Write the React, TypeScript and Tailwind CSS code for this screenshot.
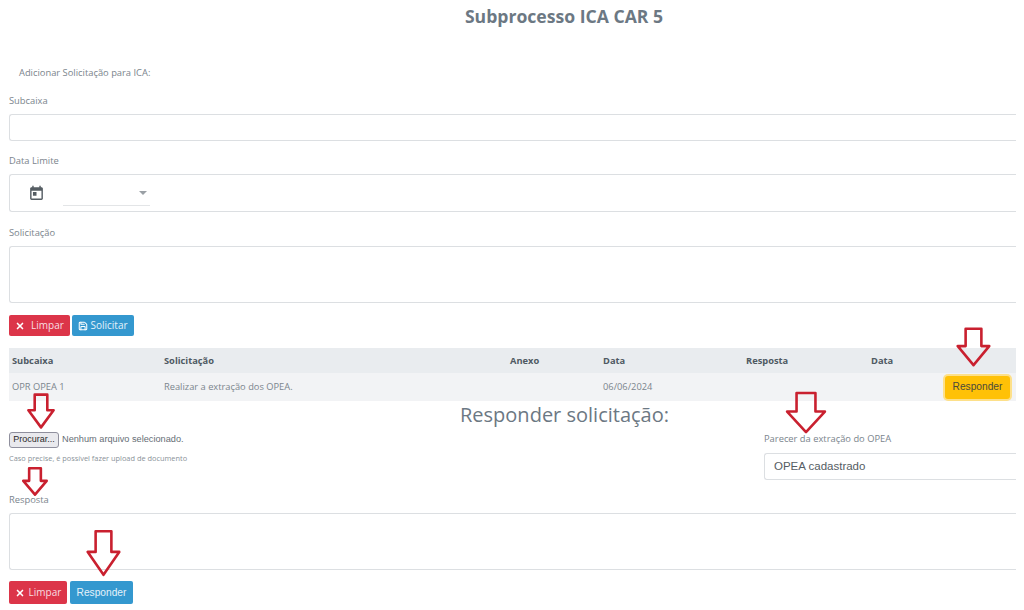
import { X, Save } from "lucide-react";

const font = "font-['Open_Sans',sans-serif]";

function DownArrow({ className }: { className: string }) {
  // block arrow, stretched to each spot by its box
  return (
    <svg className={"absolute " + className} viewBox="0 0 40 44" preserveAspectRatio="none">
      <path
        d="M11 2 H29 V21 H38 L20 42 L2 21 H11 Z"
        fill="none"
        stroke="#c9202f"
        strokeWidth="2.6"
        strokeLinejoin="round"
        vectorEffect="non-scaling-stroke"
      />
    </svg>
  );
}

function TodayIcon() {
  return (
    <svg width="17" height="17" viewBox="0 0 24 24" fill="#555d63">
      <path d="M19 3h-1V1h-2v2H8V1H6v2H5c-1.11 0-1.99.9-1.99 2L3 19c0 1.1.89 2 2 2h14c1.1 0 2-.9 2-2V5c0-1.1-.9-2-2-2zm0 16H5V8h14v11zM7 10h5v5H7z" />
    </svg>
  );
}

function Label({ children, className = "" }: { children: React.ReactNode; className?: string }) {
  return <div className={"text-[9.35px] leading-[14px] text-[#7b858d] " + className}>{children}</div>;
}

export default function App() {
  return (
    <div className={"relative w-[1024px] h-[610px] overflow-hidden bg-white " + font}>
      <div className="w-[1016px] pl-[9px]">
        <h1 className="pt-[4px] h-[66px] text-center text-[17.6px] leading-[24px] font-bold text-[#6c7883] pl-[103px]">
          Subprocesso ICA CAR 5
        </h1>
        <Label className="pl-[10px]">Adicionar Solicitação para ICA:</Label>

        <Label className="mt-[14px]">Subcaixa</Label>
        <div className="mt-[6px] h-[27px] border border-[#dcdfe2] rounded-[3px] border-r-0 rounded-r-none" />

        <Label className="mt-[13px]">Data Limite</Label>
        <div className="mt-[6px] h-[38px] border border-[#dcdfe2] rounded-[3px] border-r-0 rounded-r-none flex items-center pl-[18px]">
          <TodayIcon />
          <div className="ml-[18px] w-[87px] h-[25px] border-b border-[#e3e5e7] flex items-center justify-end pr-[3px]">
            <div className="w-0 h-0 border-x-[4px] border-x-transparent border-t-[4px] border-t-[#9aa0a5]" />
          </div>
        </div>

        <Label className="mt-[14px]">Solicitação</Label>
        <div className="mt-[6px] h-[57px] border border-[#dcdfe2] rounded-[3px] border-r-0 rounded-r-none" />

        <div className="mt-[12px] flex gap-[2px] h-[21px]">
          <button className="w-[61px] bg-[#dc3549] text-[#f8dfe2] rounded-[2px] text-[10px] flex items-center justify-center gap-[6px]">
            <X size={10} strokeWidth={4} color="#ffffff" />
            Limpar
          </button>
          <button className="w-[62px] bg-[#3498cf] text-[#e4f2fa] rounded-[2px] text-[10px] flex items-center justify-center gap-[2px]">
            <Save size={10} strokeWidth={2.5} color="#ffffff" />
            Solicitar
          </button>
        </div>

        <div className="mt-[12px] h-[25px] bg-[#e9ecef] pl-[3px] grid grid-cols-[152px_346px_93px_143px_125px_1fr] items-center text-[9.3px] font-bold text-[#4f5a63]">
          <div>Subcaixa</div>
          <div>Solicitação</div>
          <div>Anexo</div>
          <div>Data</div>
          <div>Resposta</div>
          <div>Data</div>
        </div>
        <div className="h-[28px] bg-[#f2f3f5] pl-[3px] grid grid-cols-[152px_346px_93px_143px_125px_1fr] items-center text-[9.3px] text-[#7b858d]">
          <div>OPR OPEA 1</div>
          <div>Realizar a extração dos OPEA.</div>
          <div />
          <div>06/06/2024</div>
          <div />
          <div className="flex justify-end pr-[6px]">
            <button className="w-[65px] h-[23px] bg-[#ffc107] rounded-[3px] ring-2 ring-[#fde08a] font-['Liberation_Sans',sans-serif] text-[10.2px] text-[#4b4a3c]">
              Responder
            </button>
          </div>
        </div>

        <div className="flex">
          <div className="w-[451px]">
            <div className="mt-[31px] flex items-center gap-[3px] h-[16px]">
              <button className="w-[50px] h-[16px] bg-[#e9e9ed] border border-[#8f8f9d] rounded-[3px] font-['Liberation_Sans',sans-serif] text-[9px] text-[#2b2b2b]">
                Procurar...
              </button>
              <span className="font-['Liberation_Sans',sans-serif] text-[9.2px] text-[#666e75]">
                Nenhum arquivo selecionado.
              </span>
            </div>
            <div className="mt-[5px] text-[7.4px] leading-[10px] text-[#8a9299] whitespace-nowrap">
              Caso precise, é possível fazer upload de documento
            </div>
          </div>
          <div className="flex-1 mt-[5px] text-[20px] leading-[18px] text-[#6c7883] whitespace-nowrap">
            Responder solicitação:
          </div>
          <div className="w-[252px] mt-[31px]">
            <Label>Parecer da extração do OPEA</Label>
            <div className="mt-[7px] h-[27px] border border-[#dcdfe2] border-r-0 rounded-l-[3px] flex items-center pl-[9px] font-['Liberation_Sans',sans-serif] text-[11.5px] text-[#555d63]">
              OPEA cadastrado
            </div>
          </div>
        </div>

        <Label className="mt-[13px]">Resposta</Label>
        <div className="mt-[6px] h-[57px] border border-[#dcdfe2] rounded-[3px] border-r-0 rounded-r-none" />

        <div className="mt-[11px] flex gap-[3px] h-[23px]">
          <button className="w-[58px] bg-[#dc3549] text-[#f8dfe2] rounded-[2px] text-[10px] flex items-center justify-center gap-[4px]">
            <X size={10} strokeWidth={4} color="#ffffff" />
            Limpar
          </button>
          <button className="w-[63px] bg-[#3498cf] text-[#e4f2fa] rounded-[2px] font-['Liberation_Sans',sans-serif] text-[10.2px]">
            Responder
          </button>
        </div>
      </div>

      <DownArrow className="left-[956px] top-[327px] w-[35px] h-[40px]" />
      <DownArrow className="left-[27px] top-[393px] w-[28px] h-[36px]" />
      <DownArrow className="left-[22px] top-[467px] w-[26px] h-[29px]" />
      <DownArrow className="left-[86px] top-[529px] w-[35px] h-[48px]" />
      <DownArrow className="left-[785px] top-[391px] w-[42px] h-[43px]" />
    </div>
  );
}
